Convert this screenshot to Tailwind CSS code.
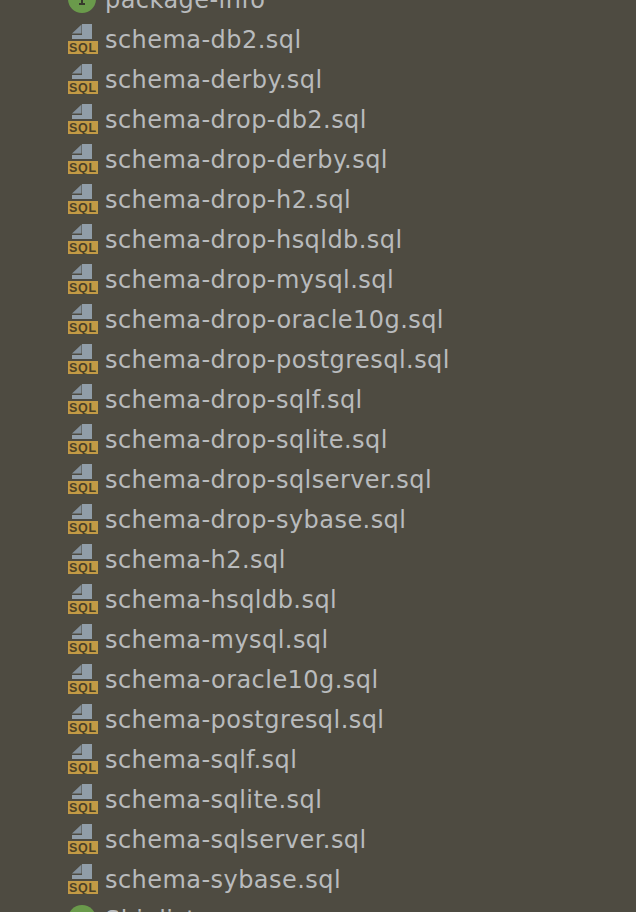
<!DOCTYPE html>
<html lang="en">
<head>
    <meta charset="UTF-8">
    <title>Project tree</title>
    <script src="https://cdn.jsdelivr.net/npm/@tailwindcss/browser@4"></script>
</head>
<body class="bg-[#4e4b41] overflow-hidden">
    <div class="h-[912px] overflow-hidden">
        <ul id="tree" class="-mt-[21px] pl-[68px] font-['DejaVu_Sans',sans-serif] text-[24px] tracking-[0.45px] text-[#b9bbbd]">
            <li class="h-10 flex items-center gap-[7px]">
                <svg width="30" height="30" viewBox="0 0 30 30"><circle cx="14" cy="15" r="14" fill="#6a9a4b"/><path d="M11 10h6M14 10v10M11 20h6" stroke="#37392c" stroke-width="2" fill="none"/></svg>
                <span class="pt-[2px]">package-info</span>
            </li>
        </ul>
    </div>
    <template id="sql-row">
        <li class="h-10 flex items-center gap-[7px]">
            <svg width="30" height="30" viewBox="0 0 30 30">
                <path d="M4 9.5 L13.5 0.5 L13.5 9.5 Z" fill="#84919c"/>
                <path d="M4 11 H14 V0 H24 V15 H4 Z" fill="#909da8"/>
                <rect x="0" y="17" width="30" height="13" fill="#c29a45"/>
                <text x="15" y="28" text-anchor="middle" font-family="Liberation Sans" font-weight="700" font-size="12.5" fill="#4a4028" letter-spacing="0.8">SQL</text>
            </svg>
            <span class="name pt-[2px]"></span>
        </li>
    </template>
    <template id="class-row">
        <li class="h-10 flex items-center gap-[7px]">
            <svg width="30" height="30" viewBox="0 0 30 30"><circle cx="14" cy="15" r="14" fill="#6a9a4b"/></svg>
            <span class="pt-[2px]">Shiplist</span>
        </li>
    </template>
    <script>
        const names = ['schema-db2.sql','schema-derby.sql','schema-drop-db2.sql','schema-drop-derby.sql','schema-drop-h2.sql','schema-drop-hsqldb.sql','schema-drop-mysql.sql','schema-drop-oracle10g.sql','schema-drop-postgresql.sql','schema-drop-sqlf.sql','schema-drop-sqlite.sql','schema-drop-sqlserver.sql','schema-drop-sybase.sql','schema-h2.sql','schema-hsqldb.sql','schema-mysql.sql','schema-oracle10g.sql','schema-postgresql.sql','schema-sqlf.sql','schema-sqlite.sql','schema-sqlserver.sql','schema-sybase.sql'];
        const tree = document.getElementById('tree');
        const tpl = document.getElementById('sql-row');
        names.forEach((n) => {
            const row = tpl.content.cloneNode(true);
            row.querySelector('.name').textContent = n;
            tree.appendChild(row);
        });
        tree.appendChild(document.getElementById('class-row').content.cloneNode(true));
    </script>
</body>
</html>
